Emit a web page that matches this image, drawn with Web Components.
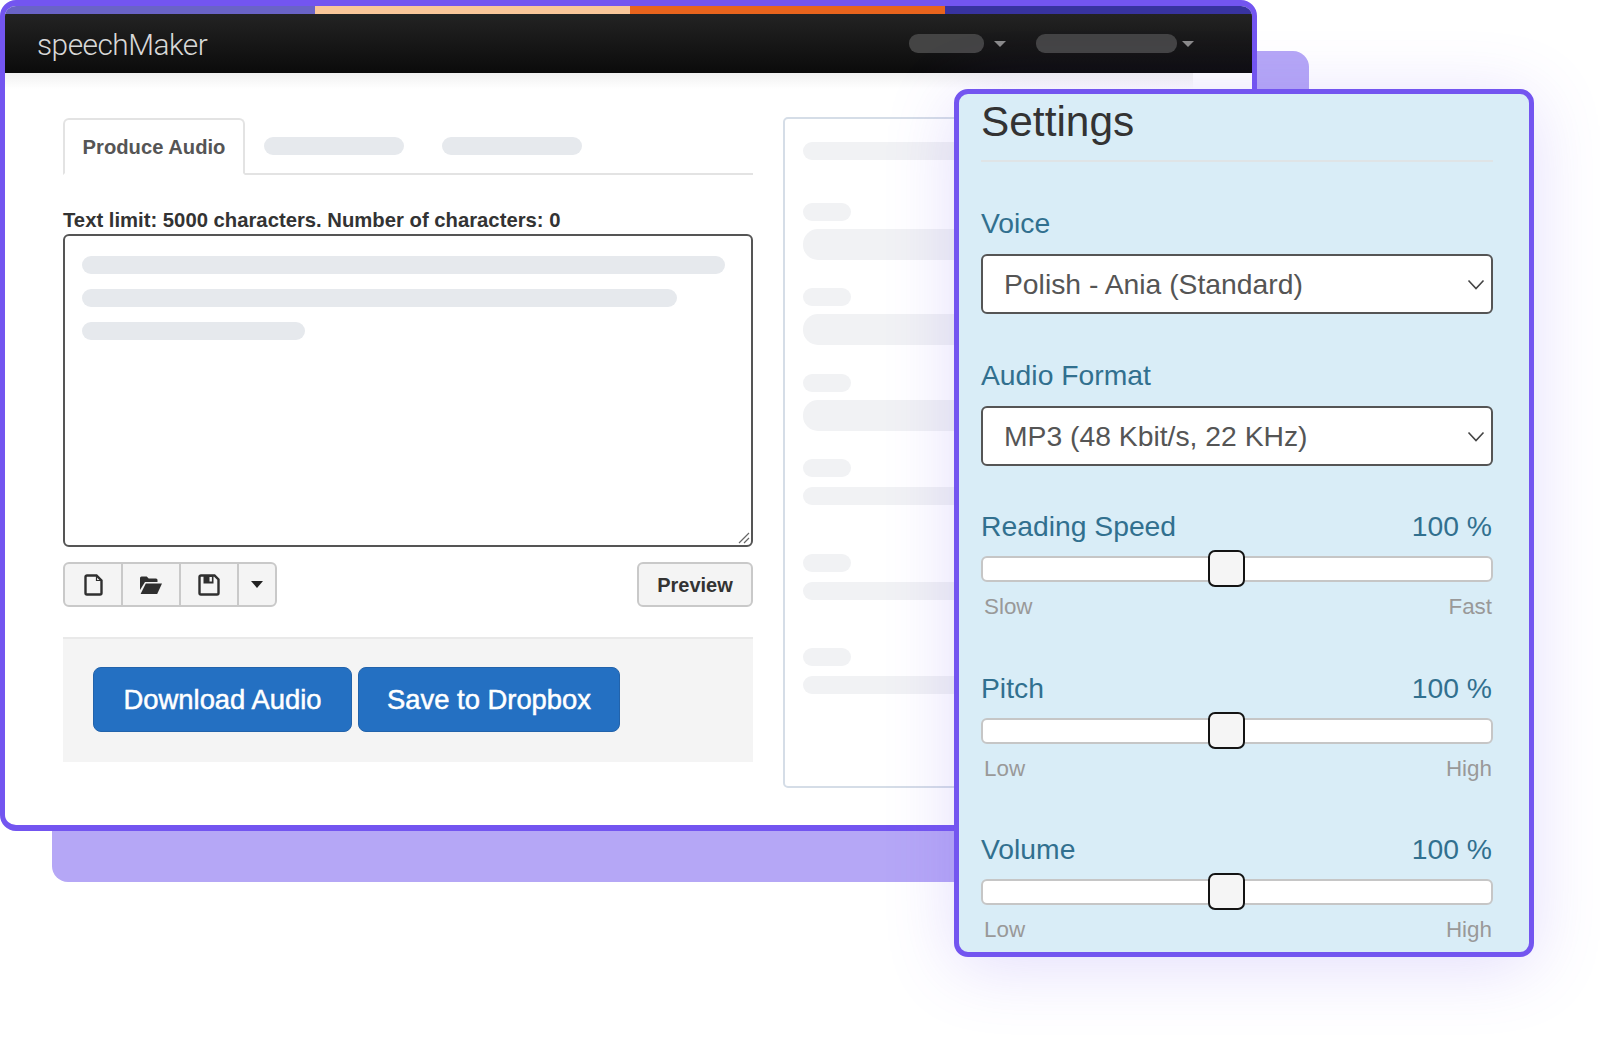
<!DOCTYPE html>
<html lang="en">
<head>
<meta charset="utf-8">
<title>speechMaker</title>
<style>
  html, body { margin: 0; background: #fff; }
  body { font-family: "Liberation Sans", Arial, sans-serif; overflow: hidden; }
</style>
</head>
<body>
<sm-stage>
  <sm-window>
    <sm-nav>speechMaker</sm-nav>
    <sm-tabs>Produce Audio</sm-tabs>
    <sm-editor>Text limit: 5000 characters. Number of characters: 0</sm-editor>
    <sm-toolbar>Preview</sm-toolbar>
    <sm-actions>
      <sm-button style="width: 259px">Download Audio</sm-button>
      <sm-button style="width: 262px">Save to Dropbox</sm-button>
    </sm-actions>
    <sm-side-card slot="side"></sm-side-card>
  </sm-window>
  <sm-settings>
    <sm-select label="Voice">Polish - Ania (Standard)</sm-select>
    <sm-select label="Audio Format">MP3 (48 Kbit/s, 22 KHz)</sm-select>
    <sm-slider label="Reading Speed" value="100 %" low="Slow" high="Fast"></sm-slider>
    <sm-slider label="Pitch" value="100 %" low="Low" high="High"></sm-slider>
    <sm-slider label="Volume" value="100 %" low="Low" high="High"></sm-slider>
  </sm-settings>
</sm-stage>

<script>
  // grey placeholder pill
  customElements.define('sm-bar', class extends HTMLElement {
    constructor() {
      super();
      this.attachShadow({ mode: 'open' }).innerHTML = `
        <style>
          :host {
            display: block;
            flex: none;
            width: var(--w, 100%);
            height: var(--h, 18px);
            margin-top: var(--mt, 0);
            border-radius: var(--r, 9px);
            background: var(--bar, #e6e9ed);
          }
        </style>
      `;
    }
  });

  customElements.define('sm-stage', class extends HTMLElement {
    constructor() {
      super();
      this.attachShadow({ mode: 'open' }).innerHTML = `
        <style>
          :host {
            display: block;
            position: relative;
            width: 1600px;
            height: 1048px;
            overflow: hidden;
          }
          .back {
            position: absolute;
            left: 52px;
            top: 51px;
            width: 1257px;
            height: 831px;
            border-radius: 16px;
            background: #b5a7f6;
          }
        </style>
        <div class="back"></div>
        <slot></slot>
      `;
    }
  });

  customElements.define('sm-window', class extends HTMLElement {
    constructor() {
      super();
      this.attachShadow({ mode: 'open' }).innerHTML = `
        <style>
          :host {
            display: block;
            position: absolute;
            left: 0;
            top: 0;
            box-sizing: border-box;
            width: 1257px;
            height: 831px;
            border: solid #7355f0;
            border-width: 6px 5px;
            border-radius: 16px;
            background: #fff;
            overflow: hidden;
          }
          .stripe {
            display: grid;
            grid-template-columns: 310px 315px 315px 1fr;
            height: 8px;
          }
          .stripe i:nth-child(1) { background: #6a63c6; }
          .stripe i:nth-child(2) { background: #f9c699; }
          .stripe i:nth-child(3) { background: #e8641d; }
          .stripe i:nth-child(4) { background: #38339f; }
          .main {
            position: relative;
            display: grid;
            grid-template-columns: 690px 500px;
            column-gap: 30px;
            padding: 45px 0 0 58px;
          }
          .main::before {
            content: "";
            position: absolute;
            left: 0;
            top: 0;
            width: 1188px;
            height: 16px;
            background: linear-gradient(#f1f1f1, #fff);
          }
          .left { min-width: 0; }
        </style>
        <div class="stripe"><i></i><i></i><i></i><i></i></div>
        <slot name="nav"></slot>
        <div class="main">
          <div class="left"><slot></slot></div>
          <slot name="side"></slot>
        </div>
      `;
      this.querySelector('sm-nav').slot = 'nav';
    }
  });

  customElements.define('sm-nav', class extends HTMLElement {
    constructor() {
      super();
      this.attachShadow({ mode: 'open' }).innerHTML = `
        <style>
          :host {
            display: flex;
            align-items: center;
            height: 59px;
            padding: 0 0 0 32px;
            background: linear-gradient(#232323, #0b0b0b);
          }
          .brand {
            flex: 1;
            padding-top: 2px;
            color: #d8d8d8;
            font: 300 29.8px/1 Roboto, "Liberation Sans", sans-serif;
            letter-spacing: -0.5px;
          }
          .menu { display: flex; align-items: center; --bar: #444; }
          .caret {
            width: 0;
            height: 0;
            border-left: 6px solid transparent;
            border-right: 6px solid transparent;
            border-top: 6px solid #8b8b8b;
          }
        </style>
        <div class="brand"><slot></slot></div>
        <div class="menu" style="margin-right: 30px">
          <sm-bar style="--w:75px;--h:19px;margin-right:10px"></sm-bar><span class="caret"></span>
        </div>
        <div class="menu" style="margin-right: 58px">
          <sm-bar style="--w:141px;--h:19px;margin-right:5px"></sm-bar><span class="caret"></span>
        </div>
      `;
    }
  });

  customElements.define('sm-tabs', class extends HTMLElement {
    constructor() {
      super();
      this.attachShadow({ mode: 'open' }).innerHTML = `
        <style>
          :host {
            display: flex;
            align-items: center;
            height: 57px;
            box-sizing: border-box;
            border-bottom: 2px solid #e3e3e3;
          }
          .tab {
            box-sizing: border-box;
            width: 182px;
            height: 57px;
            align-self: flex-start;
            border: 2px solid #e3e3e3;
            border-bottom-color: #fff;
            border-radius: 6px 6px 0 0;
            color: #555;
            font-size: 20.2px;
            font-weight: 700;
            line-height: 54px;
            text-align: center;
          }
        </style>
        <div class="tab"><slot></slot></div>
        <sm-bar style="--w:140px;--mt:1px;margin-left:19px"></sm-bar>
        <sm-bar style="--w:140px;--mt:1px;margin-left:38px"></sm-bar>
      `;
    }
  });

  customElements.define('sm-editor', class extends HTMLElement {
    constructor() {
      super();
      this.attachShadow({ mode: 'open' }).innerHTML = `
        <style>
          :host { display: block; margin-top: 33px; }
          .limit {
            color: #333;
            font-size: 20.27px;
            font-weight: 700;
            line-height: 24px;
            margin-bottom: 2px;
          }
          .area {
            position: relative;
            box-sizing: border-box;
            height: 313px;
            padding: 20px 17px;
            border: 2px solid #555;
            border-radius: 6px;
          }
          svg { position: absolute; right: 1px; bottom: 1px; }
        </style>
        <div class="limit"><slot></slot></div>
        <div class="area">
          <sm-bar style="--w:643px"></sm-bar>
          <sm-bar style="--w:595px;--mt:15px"></sm-bar>
          <sm-bar style="--w:223px;--mt:15px"></sm-bar>
          <svg width="12" height="12" viewBox="0 0 12 12" fill="none" stroke="#666" stroke-width="1.2">
            <path d="M1 11 11 1M6 11l5-5"/>
          </svg>
        </div>
      `;
    }
  });

  customElements.define('sm-toolbar', class extends HTMLElement {
    constructor() {
      super();
      this.attachShadow({ mode: 'open' }).innerHTML = `
        <style>
          :host {
            display: flex;
            justify-content: space-between;
            height: 45px;
            margin-top: 15px;
          }
          .group, .preview {
            box-sizing: border-box;
            height: 45px;
            border: 2px solid #c9c9c9;
            border-radius: 6px;
            background: #f4f4f4;
          }
          .group { display: flex; }
          .group span {
            display: flex;
            align-items: center;
            justify-content: center;
            box-sizing: border-box;
            width: 58px;
            border-right: 2px solid #c9c9c9;
          }
          .group span:last-child { width: 36px; border-right: 0; }
          .preview {
            width: 116px;
            color: #333;
            font-size: 20px;
            font-weight: 700;
            line-height: 43px;
            text-align: center;
          }
        </style>
        <div class="group">
          <span>
            <svg width="19" height="22" viewBox="0 0 19 22" fill="none" stroke="#2f2f2f" stroke-width="2.4">
              <path d="M3 1.500h9.500l5 5V19a1.500 1.500 0 0 1-1.500 1.500H3A1.500 1.500 0 0 1 1.500 19V3A1.500 1.500 0 0 1 3 1.500z"/>
              <path d="M12.500 2v4.500H17" stroke-width="1.2"/>
            </svg>
          </span>
          <span>
            <svg width="22" height="18" viewBox="0 0 22 18" fill="#2f2f2f">
              <path d="M0 2a1.500 1.500 0 0 1 1.500-1.500h5.200l2 2h7.300A1.500 1.500 0 0 1 17.500 4v2H5L0 14z"/>
              <path d="M5.800 7.500H22L17.200 18H.6z"/>
            </svg>
          </span>
          <span>
            <svg width="22" height="22" viewBox="0 0 22 22" fill="none" stroke="#2f2f2f" stroke-width="2.4">
              <path d="M1.500 3A1.500 1.500 0 0 1 3 1.500h13.500l4 4V19a1.500 1.500 0 0 1-1.500 1.500H3A1.500 1.500 0 0 1 1.500 19z"/>
              <path d="M5.500 2v7.500h10V2" fill="#2f2f2f" stroke="none"/>
              <path d="M11.500 3h2.400v4.500h-2.400z" fill="#f4f4f4" stroke="none"/>
            </svg>
          </span>
          <span>
            <svg width="12" height="7" viewBox="0 0 12 7" fill="#222"><path d="M0 0h12L6 7z"/></svg>
          </span>
        </div>
        <div class="preview"><slot></slot></div>
      `;
    }
  });

  customElements.define('sm-actions', class extends HTMLElement {
    constructor() {
      super();
      this.attachShadow({ mode: 'open' }).innerHTML = `
        <style>
          :host {
            display: flex;
            gap: 6px;
            box-sizing: border-box;
            height: 125px;
            margin-top: 30px;
            padding: 28px 0 0 30px;
            border-top: 2px solid #e9e9e9;
            background: #f4f4f4;
          }
        </style>
        <slot></slot>
      `;
    }
  });

  customElements.define('sm-button', class extends HTMLElement {
    constructor() {
      super();
      this.attachShadow({ mode: 'open' }).innerHTML = `
        <style>
          :host {
            display: block;
            box-sizing: border-box;
            height: 65px;
            border: 1px solid #2263ab;
            border-radius: 8px;
            background: #2470c2;
            color: #fff;
            font-size: 27.4px;
            line-height: 63px;
            text-align: center;
            -webkit-text-stroke: .5px #fff;
          }
        </style>
        <slot></slot>
      `;
    }
  });

  customElements.define('sm-side-card', class extends HTMLElement {
    constructor() {
      super();
      const rows = [
        [400, 18, 0], [48, 18, 43], [400, 31, 8, 15], [48, 18, 28], [400, 31, 8, 15], [48, 18, 29],
        [400, 31, 8, 15], [48, 18, 28], [400, 18, 10], [48, 18, 49], [400, 18, 10], [48, 18, 48], [400, 18, 10]
      ].map(([w, h, mt, r]) => `<sm-bar style="--w:${w}px;--h:${h}px;--mt:${mt}px;--r:${r || 9}px"></sm-bar>`).join('');
      this.attachShadow({ mode: 'open' }).innerHTML = `
        <style>
          :host {
            display: block;
            box-sizing: border-box;
            height: 671px;
            margin-top: -1px;
            padding: 23px 0 0 18px;
            border: 2px solid #d5dde7;
            border-radius: 5px;
            --bar: #f1f2f4;
          }
        </style>
        ${rows}
      `;
    }
  });

  customElements.define('sm-settings', class extends HTMLElement {
    constructor() {
      super();
      this.attachShadow({ mode: 'open' }).innerHTML = `
        <style>
          :host {
            display: block;
            position: absolute;
            left: 954px;
            top: 89px;
            box-sizing: border-box;
            width: 580px;
            height: 868px;
            padding: 5px 36px 0 22px;
            border: 5px solid #7355f0;
            border-radius: 14px;
            background: #d9edf7;
            box-shadow: 0 10px 70px rgba(115, 85, 240, .2);
          }
          h1 {
            margin: 0;
            padding-bottom: 15px;
            border-bottom: 2px solid #dfe4e6;
            color: #333;
            font-size: 42.4px;
            font-weight: 400;
            line-height: 46px;
          }
          .fields { display: flex; flex-direction: column; padding-top: 45px; }
        </style>
        <h1>Settings</h1>
        <div class="fields"><slot></slot></div>
      `;
    }
  });

  customElements.define('sm-select', class extends HTMLElement {
    constructor() {
      super();
      this.attachShadow({ mode: 'open' }).innerHTML = `
        <style>
          :host { display: block; margin-bottom: 45px; }
          label {
            display: block;
            margin-bottom: 14px;
            color: #31708f;
            font-size: 28.3px;
            line-height: 33px;
          }
          .box {
            display: flex;
            align-items: center;
            justify-content: space-between;
            box-sizing: border-box;
            height: 60px;
            padding: 0 6px 0 21px;
            border: 2px solid #555;
            border-radius: 6px;
            background: #fff;
            color: #555;
            font-size: 28.3px;
          }
        </style>
        <label>${this.getAttribute('label')}</label>
        <div class="box">
          <slot></slot>
          <svg width="18" height="11" viewBox="0 0 18 11" fill="none" stroke="#444" stroke-width="1.6">
            <path d="M1.500 1.500 9 9.500l7.500-8"/>
          </svg>
        </div>
      `;
    }
  });

  customElements.define('sm-slider', class extends HTMLElement {
    constructor() {
      super();
      this.attachShadow({ mode: 'open' }).innerHTML = `
        <style>
          :host { display: block; margin-bottom: 52.500px; }
          .head, .foot { display: flex; justify-content: space-between; }
          .head {
            padding-right: 1px;
            color: #31708f;
            font-size: 28.3px;
            line-height: 31px;
          }
          .track {
            position: relative;
            box-sizing: border-box;
            height: 26px;
            margin: 14px 0 12px;
            border: 2px solid #c6c6c6;
            border-radius: 6px;
            background: #fff;
          }
          .thumb {
            position: absolute;
            left: 225px;
            top: -8px;
            box-sizing: border-box;
            width: 37px;
            height: 37px;
            border: 2px solid #141414;
            border-radius: 7px;
            background: #f5f5f5;
          }
          .foot {
            padding: 0 1px 0 3px;
            color: #999;
            font-size: 22.400px;
            line-height: 26px;
          }
        </style>
        <div class="head"><span>${this.getAttribute('label')}</span><span>${this.getAttribute('value')}</span></div>
        <div class="track"><div class="thumb"></div></div>
        <div class="foot"><span>${this.getAttribute('low')}</span><span>${this.getAttribute('high')}</span></div>
      `;
    }
  });
</script>
</body>
</html>
